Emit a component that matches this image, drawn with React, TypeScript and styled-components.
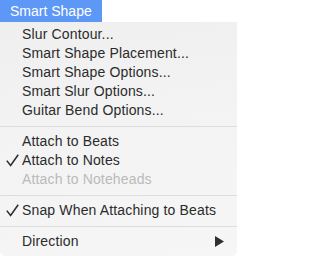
import React from "react";
import styled, { createGlobalStyle } from "styled-components";

const Global = createGlobalStyle`
  html, body { margin: 0; padding: 0; background: #ffffff; }
  body { font-family: "Liberation Sans", Arial, sans-serif; -webkit-font-smoothing: antialiased; }
`;

const Page = styled.div`
  width: 237px;
  height: 256px;
  display: flex;
  flex-direction: column;
  overflow: hidden;
`;

const MenuTitle = styled.div`
  align-self: flex-start;
  width: 102px;
  height: 22px;
  box-sizing: border-box;
  padding-left: 10px;
  background: #5e98f6;
  color: #ffffff;
  font-size: 14px;
  line-height: 22px;
`;

const Menu = styled.div`
  flex: 1;
  display: flex;
  flex-direction: column;
  padding-top: 3px;
  background: linear-gradient(170deg, #efefef 0%, #f3f3f3 45%, #f6f6f6 100%);
  border-radius: 0 0 5px 5px;
`;

const Item = styled.div<{ $disabled?: boolean }>`
  height: 19px;
  display: grid;
  grid-template-columns: 22px 1fr 22px;
  align-items: center;
  font-size: 14px;
  letter-spacing: 0.15px;
  line-height: 19px;
  color: ${(p) => (p.$disabled ? "#bababa" : "#2b2b2b")};
  white-space: nowrap;
`;

const CheckCell = styled.span`
  display: flex;
  align-items: center;
  justify-content: flex-start;
  padding-left: 6px;
`;

const ArrowCell = styled.span`
  display: flex;
  align-items: center;
  justify-content: flex-start;
`;

const Separator = styled.div`
  height: 1px;
  margin: 6px 0 5px;
  background: #dddddd;
`;

const Check = () => (
  <svg width="13" height="13" viewBox="0 0 13 13">
    <path d="M0.8 6.6 L4.6 11.4 L12.2 0.8" fill="none" stroke="#2b2b2b" strokeWidth="1.5" />
  </svg>
);

const Arrow = () => (
  <svg width="10" height="11" viewBox="0 0 10 11">
    <path d="M0 0 L9 5.5 L0 11 Z" fill="#2f2f2f" />
  </svg>
);

type Entry =
  | { kind: "item"; label: string; checked?: boolean; disabled?: boolean; submenu?: boolean }
  | { kind: "sep" };

const entries: Entry[] = [
  { kind: "item", label: "Slur Contour..." },
  { kind: "item", label: "Smart Shape Placement..." },
  { kind: "item", label: "Smart Shape Options..." },
  { kind: "item", label: "Smart Slur Options..." },
  { kind: "item", label: "Guitar Bend Options..." },
  { kind: "sep" },
  { kind: "item", label: "Attach to Beats" },
  { kind: "item", label: "Attach to Notes", checked: true },
  { kind: "item", label: "Attach to Noteheads", disabled: true },
  { kind: "sep" },
  { kind: "item", label: "Snap When Attaching to Beats", checked: true },
  { kind: "sep" },
  { kind: "item", label: "Direction", submenu: true },
];

export default function App() {
  return (
    <>
      <Global />
      <Page>
        <MenuTitle>Smart Shape</MenuTitle>
        <Menu>
          {entries.map((e, i) =>
            e.kind === "sep" ? (
              <Separator key={i} />
            ) : (
              <Item key={i} $disabled={e.disabled}>
                <CheckCell>{e.checked ? <Check /> : null}</CheckCell>
                <span>{e.label}</span>
                <ArrowCell>{e.submenu ? <Arrow /> : null}</ArrowCell>
              </Item>
            )
          )}
        </Menu>
      </Page>
    </>
  );
}
